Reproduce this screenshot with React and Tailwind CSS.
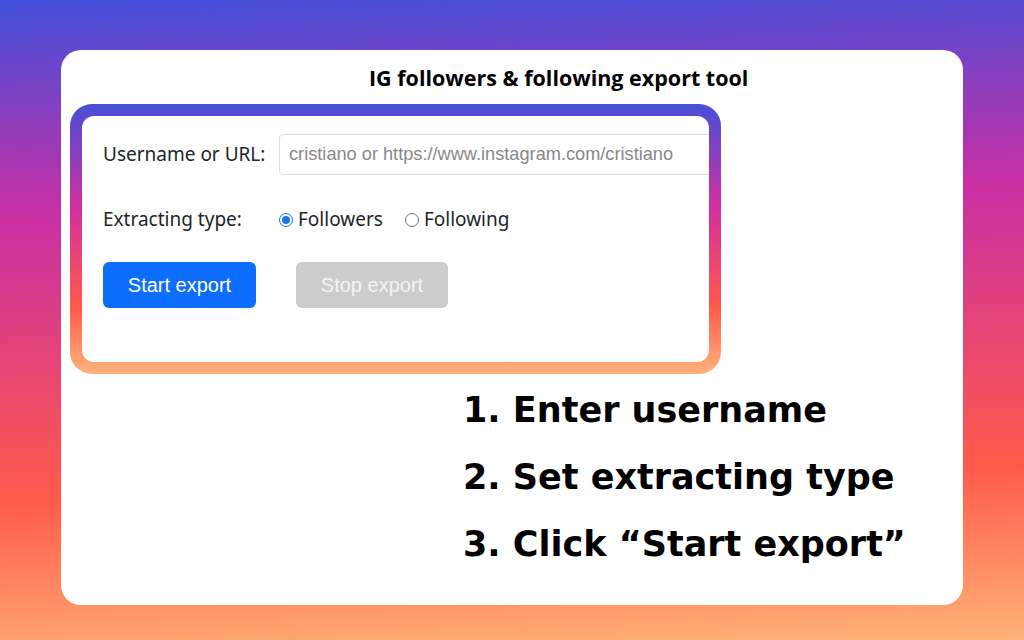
import React from 'react';

const steps = ['1. Enter username', '2. Set extracting type', '3. Click \u201cStart export\u201d'];

const Radio = ({ checked, label }) => (
    <label className="flex items-center gap-[5px]">
        {checked ? (
            <span className="w-[14px] h-[14px] rounded-full border-[1.5px] border-[#1a73e8] flex items-center justify-center">
                <span className="w-[8px] h-[8px] rounded-full bg-[#1a73e8]" />
            </span>
        ) : (
            <span className="w-[14px] h-[14px] rounded-full border border-[#767676] bg-white" />
        )}
        <span>{label}</span>
    </label>
);

const App = () => {
    return (
        <div className="w-[1024px] h-[640px] pt-[50px] pl-[61px] bg-[linear-gradient(178deg,#4150db_0%,#c92fa5_32%,#ff5a4a_74%,#ffb377_100%)]">
            <div className="w-[902px] h-[555px] bg-white rounded-[20px] pt-[14px]">
                <h1 className="ml-[308px] text-[21.5px] font-bold text-black leading-[28px] font-['Open_Sans',sans-serif]">
                    IG followers &amp; following export tool
                </h1>

                <div className="ml-[9px] mt-[12px] w-[651px] h-[270px] p-[12px] rounded-[22px] bg-[linear-gradient(180deg,#474fd8_0%,#d12fa0_38%,#ff5a4c_75%,#ffb37b_100%)]">
                    <div className="w-full h-full bg-white rounded-[12px] overflow-hidden pl-[21px] pt-[18px] text-[19px] text-[#212529] font-['Noto_Sans',sans-serif]">
                        <div className="flex items-center">
                            <span className="w-[176px] shrink-0">Username or URL:</span>
                            <div className="shrink-0 w-[460px] h-[41px] border border-[#dcdcdc] rounded-[4px] flex items-center pl-[9px] text-[18.2px] text-[#888] font-['Liberation_Sans',sans-serif]">
                                cristiano or https://www.instagram.com/cristiano
                            </div>
                        </div>

                        <div className="flex items-center mt-[24px] h-[41px]">
                            <span className="w-[176px] shrink-0">Extracting type:</span>
                            <div className="flex items-center gap-[22px]">
                                <Radio checked label="Followers" />
                                <Radio label="Following" />
                            </div>
                        </div>

                        <div className="flex items-center gap-[40px] mt-[22px] font-['Liberation_Sans',sans-serif] text-[20px]">
                            <div className="w-[153px] h-[46px] rounded-[6px] bg-[#0d6efd] text-white flex items-center justify-center">
                                Start export
                            </div>
                            <div className="w-[152px] h-[46px] rounded-[6px] bg-[#cccccc] text-[#f4f4f4] flex items-center justify-center">
                                Stop export
                            </div>
                        </div>
                    </div>
                </div>

                <div className="ml-[402px] mt-[3px] flex flex-col font-['DejaVu_Sans',sans-serif] font-bold text-[35px] text-black leading-[67px]">
                    {steps.map((s) => (
                        <div key={s}>{s}</div>
                    ))}
                </div>
            </div>
        </div>
    );
};

export default App;
